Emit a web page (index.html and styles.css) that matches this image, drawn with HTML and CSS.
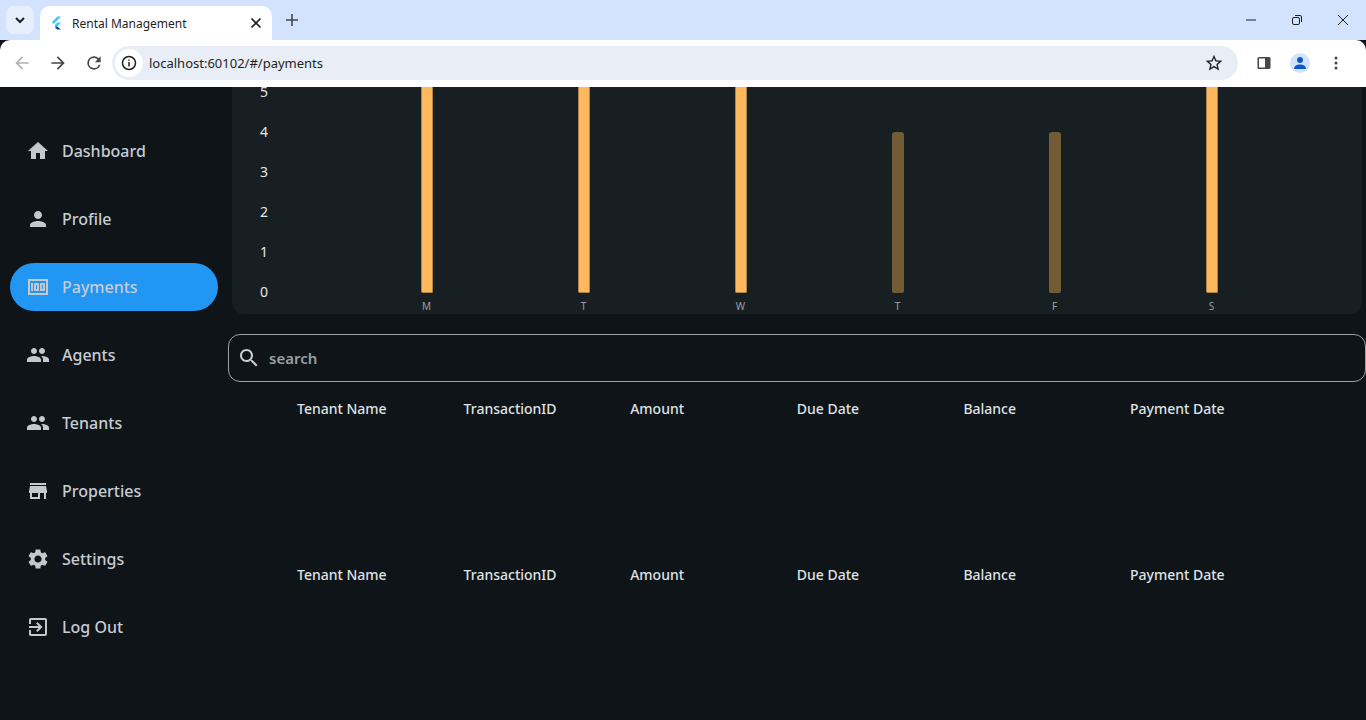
FILE: index.html
```html
<!DOCTYPE html>
<html lang="en">
<head>
    <meta charset="UTF-8">
    <title>Rental Management</title>
    <link rel="stylesheet" href="styles.css">
</head>
<body>
    <div class="tabstrip">
        <div class="tab-search">
            <svg class="ico-16" viewBox="0 0 16 16"><path d="M4 6l4 4 4-4" fill="none" stroke="#1f1f1f" stroke-width="2"/></svg>
        </div>
        <div class="tab">
            <svg class="favicon" viewBox="0 0 16 16">
                <path d="M9.5 1.5h3.6L5.6 9 3.8 7.2z" fill="#44c7f4"/>
                <path d="M9.4 7.6H13L9.2 11.4l-1.8-1.9z" fill="#44c7f4"/>
                <path d="M7.4 9.5l1.8 1.9-1.8 1.8z" fill="#1b6fc9"/>
                <path d="M9.2 11.4l3.8 3.1H9.4l-2-1.3z" fill="#0a3f8f"/>
            </svg>
            <span class="tab-title">Rental Management</span>
            <svg class="tab-close" viewBox="0 0 16 16"><path d="M3.5 3.5l9 9M12.500 3.500l-9 9" stroke="#1f1f1f" stroke-width="1.700"/></svg>
        </div>
        <svg class="new-tab" viewBox="0 0 16 16"><path d="M8 2v12M2 8h12" stroke="#444746" stroke-width="1.600"/></svg>
        <div class="window-btns">
            <svg class="win-btn" viewBox="0 0 16 16"><path d="M3 8h10" stroke="#1f1f1f" stroke-width="1"/></svg>
            <svg class="win-btn" viewBox="0 0 16 16"><rect x="3.500" y="5.500" width="7" height="7" rx="1.500" fill="none" stroke="#1f1f1f"/><path d="M6 3.500h5a1.500 1.500 0 0 1 1.500 1.500v5" fill="none" stroke="#1f1f1f"/></svg>
            <svg class="win-btn" viewBox="0 0 16 16"><path d="M3 3l10 10M13 3L3 13" stroke="#1f1f1f" stroke-width="1"/></svg>
        </div>
    </div>

    <div class="toolbar">
        <svg class="tool-btn" viewBox="0 0 24 24"><path d="M20 11H7.800l5.600-5.600L12 4l-8 8 8 8 1.400-1.400L7.800 13H20z" fill="#b0b2b3"/></svg>
        <svg class="tool-btn" viewBox="0 0 24 24"><path d="M4 11h12.200l-5.600-5.600L12 4l8 8-8 8-1.400-1.400 5.600-5.600H4z" fill="#444746"/></svg>
        <svg class="tool-btn" viewBox="0 0 24 24"><path d="M17.650 6.350A7.950 7.950 0 0 0 12 4a8 8 0 1 0 7.730 10h-2.080A6 6 0 1 1 12 6c1.660 0 3.140.69 4.220 1.780L13 11h7V4z" fill="#444746"/></svg>
        <div class="omnibox">
            <div class="site-info">
                <svg class="ico-16" viewBox="0 0 16 16"><circle cx="8" cy="8" r="6.500" fill="none" stroke="#1f1f1f" stroke-width="1.500"/><path d="M8 7v4.500M8 4.500v1.300" stroke="#1f1f1f" stroke-width="1.500"/></svg>
            </div>
            <span class="url">localhost:60102/#/payments</span>
            <svg class="star" viewBox="0 0 24 24"><path d="M22 9.240l-7.190-.62L12 2 9.190 8.630 2 9.240l5.460 4.730L5.820 21 12 17.270 18.180 21l-1.630-7.030L22 9.240zM12 15.400l-3.760 2.270 1-4.280-3.320-2.880 4.380-.38L12 6.100l1.710 4.040 4.380.38-3.320 2.880 1 4.280L12 15.400z" fill="#1f1f1f"/></svg>
        </div>
        <div class="toolbar-right">
            <svg class="side-panel" viewBox="0 0 16 16"><rect x="1.500" y="2" width="13" height="12" rx="1.500" fill="#444746"/><rect x="3" y="3.500" width="6" height="9" fill="#fff"/></svg>
            <div class="avatar">
                <svg class="ico-16" viewBox="0 0 16 16"><circle cx="8" cy="5" r="3" fill="#0b57d0"/><path d="M2 14c0-3.200 3-4.500 6-4.500s6 1.300 6 4.500z" fill="#0b57d0"/></svg>
            </div>
            <svg class="menu-dots" viewBox="0 0 16 16"><circle cx="8" cy="3" r="1.500" fill="#444746"/><circle cx="8" cy="8" r="1.500" fill="#444746"/><circle cx="8" cy="13" r="1.500" fill="#444746"/></svg>
        </div>
    </div>

    <div class="app">
        <nav class="sidebar">
            <a class="nav-item">
                <svg class="nav-ico" viewBox="0 0 24 24"><path d="M10 20v-6h4v6h5v-8h3L12 3 2 12h3v8z"/></svg>
                <span>Dashboard</span>
            </a>
            <a class="nav-item">
                <svg class="nav-ico" viewBox="0 0 24 24"><path d="M12 12c2.210 0 4-1.790 4-4s-1.790-4-4-4-4 1.790-4 4 1.790 4 4 4zm0 2c-2.670 0-8 1.340-8 4v2h16v-2c0-2.660-5.330-4-8-4z"/></svg>
                <span>Profile</span>
            </a>
            <a class="nav-item active">
                <svg class="nav-ico" viewBox="0 0 24 24"><path d="M5 8h2v8H5zm7 0H9c-.55 0-1 .45-1 1v6c0 .55.45 1 1 1h3c.55 0 1-.45 1-1V9c0-.55-.45-1-1-1zm-1 6h-1v-4h1v4zm7-6h-3c-.55 0-1 .45-1 1v6c0 .55.45 1 1 1h3c.55 0 1-.45 1-1V9c0-.55-.45-1-1-1zm-1 6h-1v-4h1v4z"/><path d="M2 4v16h20V4H2zm2 14V6h16v12H4z"/></svg>
                <span>Payments</span>
            </a>
            <a class="nav-item">
                <svg class="nav-ico" viewBox="0 0 24 24"><path d="M16 11c1.660 0 2.990-1.340 2.990-3S17.660 5 16 5c-1.660 0-3 1.340-3 3s1.340 3 3 3zm-8 0c1.660 0 2.990-1.340 2.990-3S9.660 5 8 5C6.340 5 5 6.340 5 8s1.340 3 3 3zm0 2c-2.330 0-7 1.170-7 3.500V19h14v-2.500c0-2.330-4.670-3.500-7-3.500zm8 0c-.29 0-.62.02-.97.05 1.160.84 1.970 1.970 1.970 3.450V19h6v-2.500c0-2.330-4.670-3.500-7-3.500z"/></svg>
                <span>Agents</span>
            </a>
            <a class="nav-item">
                <svg class="nav-ico" viewBox="0 0 24 24"><path d="M16 11c1.660 0 2.990-1.340 2.990-3S17.660 5 16 5c-1.660 0-3 1.340-3 3s1.340 3 3 3zm-8 0c1.660 0 2.990-1.340 2.990-3S9.660 5 8 5C6.340 5 5 6.340 5 8s1.340 3 3 3zm0 2c-2.330 0-7 1.170-7 3.500V19h14v-2.500c0-2.330-4.670-3.500-7-3.500zm8 0c-.29 0-.62.02-.97.05 1.160.84 1.970 1.970 1.970 3.450V19h6v-2.500c0-2.330-4.670-3.500-7-3.500z"/></svg>
                <span>Tenants</span>
            </a>
            <a class="nav-item">
                <svg class="nav-ico" viewBox="0 0 24 24"><path d="M20 4H4v2h16V4zm1 10v-2l-1-5H4l-1 5v2h1v6h10v-6h4v6h2v-6h1zm-9 4H6v-4h6v4z"/></svg>
                <span>Properties</span>
            </a>
            <a class="nav-item">
                <svg class="nav-ico" viewBox="0 0 24 24"><path d="M19.140 12.940c.04-.3.06-.61.06-.94 0-.32-.02-.64-.07-.94l2.030-1.580a.49.49 0 0 0 .12-.61l-1.920-3.320a.488.488 0 0 0-.59-.22l-2.390.96c-.5-.38-1.030-.7-1.620-.94l-.36-2.540a.484.484 0 0 0-.48-.41h-3.840c-.24 0-.43.17-.47.41l-.36 2.540c-.59.24-1.130.57-1.620.94l-2.390-.96c-.22-.08-.47 0-.59.22L2.740 8.870c-.12.21-.08.47.12.61l2.030 1.580c-.05.3-.09.63-.09.94s.02.64.07.94l-2.030 1.580a.49.49 0 0 0-.12.61l1.920 3.320c.12.22.37.29.59.22l2.390-.96c.5.38 1.030.7 1.620.94l.36 2.540c.05.24.24.41.48.41h3.840c.24 0 .44-.17.47-.41l.36-2.540c.59-.24 1.130-.56 1.620-.94l2.390.96c.22.08.47 0 .59-.22l1.920-3.320c.12-.22.07-.47-.12-.61l-2.010-1.580zM12 15.600c-1.980 0-3.600-1.620-3.600-3.600s1.620-3.600 3.600-3.600 3.600 1.620 3.600 3.600-1.620 3.600-3.600 3.600z"/></svg>
                <span>Settings</span>
            </a>
            <a class="nav-item">
                <svg class="nav-ico" viewBox="0 0 24 24"><path d="M10.090 15.590L11.500 17l5-5-5-5-1.410 1.410L12.670 11H3v2h9.670l-2.580 2.590zM19 3H5c-1.110 0-2 .9-2 2v4h2V5h14v14H5v-4H3v4c0 1.100.89 2 2 2h14c1.100 0 2-.9 2-2V5c0-1.100-.9-2-2-2z"/></svg>
                <span>Log Out</span>
            </a>
        </nav>

        <main class="content">
            <section class="chart-card">
                <div class="y-axis">
                    <span>5</span>
                    <span>4</span>
                    <span>3</span>
                    <span>2</span>
                    <span>1</span>
                    <span>0</span>
                </div>
                <div class="plot">
                    <div class="bar-col"><div class="bar"></div><span class="bar-label">M</span></div>
                    <div class="bar-col"><div class="bar"></div><span class="bar-label">T</span></div>
                    <div class="bar-col"><div class="bar"></div><span class="bar-label">W</span></div>
                    <div class="bar-col"><div class="bar dim"></div><span class="bar-label">T</span></div>
                    <div class="bar-col"><div class="bar dim"></div><span class="bar-label">F</span></div>
                    <div class="bar-col"><div class="bar"></div><span class="bar-label">S</span></div>
                </div>
            </section>

            <div class="search-box">
                <svg class="search-ico" viewBox="0 0 24 24"><path d="M15.500 14h-.79l-.28-.27C15.410 12.590 16 11.110 16 9.500 16 5.910 13.090 3 9.500 3S3 5.910 3 9.500 5.910 16 9.500 16c1.610 0 3.090-.59 4.230-1.570l.27.28v.79l5 4.990L20.490 19l-4.990-5zm-6 0C7.010 14 5 11.990 5 9.500S7.010 5 9.500 5 14 7.010 14 9.500 11.990 14 9.500 14z"/></svg>
                <span class="search-text">search</span>
            </div>

            <div class="table-head">
                <span>Tenant Name</span>
                <span>TransactionID</span>
                <span>Amount</span>
                <span>Due Date</span>
                <span>Balance</span>
                <span>Payment Date</span>
            </div>
            <div class="table-head second">
                <span>Tenant Name</span>
                <span>TransactionID</span>
                <span>Amount</span>
                <span>Due Date</span>
                <span>Balance</span>
                <span>Payment Date</span>
            </div>
        </main>
    </div>
</body>
</html>
```

FILE: styles.css
```css
* {
    box-sizing: border-box;
}

html, body {
    margin: 0;
    height: 720px;
    overflow: hidden;
}

body {
    font-family: "Noto Sans", "Open Sans", sans-serif;
    background-color: #0f1418;
    display: flex;
    flex-direction: column;
}

.ico-16 {
    width: 16px;
    height: 16px;
    display: block;
}

/* browser tabs */
.tabstrip {
    height: 40px;
    background-color: #d3e3fd;
    display: flex;
    align-items: flex-end;
    padding-left: 6px;
    flex-shrink: 0;
}

.tab-search {
    width: 28px;
    height: 28px;
    margin-bottom: 6px;
    border-radius: 8px;
    background-color: #e6eefc;
    display: flex;
    align-items: center;
    justify-content: center;
}

.tab {
    width: 232px;
    height: 34px;
    margin-left: 6px;
    background-color: #fff;
    border-radius: 10px 10px 0 0;
    display: flex;
    align-items: center;
    padding: 0 8px;
}

.favicon {
    width: 16px;
    height: 16px;
    flex-shrink: 0;
}

.tab-title {
    margin-left: 8px;
    font-size: 12px;
    color: #1f1f1f;
    flex: 1;
}

.tab-close {
    width: 16px;
    height: 16px;
}

.new-tab {
    width: 16px;
    height: 16px;
    margin: 0 0 12px 12px;
}

.window-btns {
    margin-left: auto;
    height: 40px;
    display: flex;
    align-items: center;
    padding-right: 15px;
    gap: 30px;
}

.win-btn {
    width: 16px;
    height: 16px;
}

/* browser toolbar */
.toolbar {
    height: 47px;
    background-color: #fff;
    border-radius: 10px 10px 0 0;
    margin-top: 0;
    display: flex;
    align-items: center;
    padding: 0 12px 1px 12px;
    flex-shrink: 0;
    position: relative;
}

.tool-btn {
    width: 20px;
    height: 20px;
    margin-right: 16px;
}

.omnibox {
    width: 1126px;
    height: 34px;
    margin-left: -8px;
    border-radius: 17px;
    background-color: #e9eef6;
    display: flex;
    align-items: center;
    padding: 0 14px 0 3px;
}

.site-info {
    width: 28px;
    height: 28px;
    border-radius: 50%;
    background-color: #fff;
    display: flex;
    align-items: center;
    justify-content: center;
}

.url {
    margin-left: 6px;
    font-size: 13px;
    color: #1f1f1f;
    flex: 1;
}

.star {
    width: 20px;
    height: 20px;
}

.toolbar-right {
    display: flex;
    align-items: center;
    margin-left: 18px;
}

.side-panel {
    width: 16px;
    height: 16px;
}

.avatar {
    width: 20px;
    height: 20px;
    margin-left: 18px;
    border-radius: 50%;
    background-color: #d3e3fd;
    display: flex;
    align-items: center;
    justify-content: center;
}

.menu-dots {
    width: 16px;
    height: 16px;
    margin-left: 18px;
}

/* app */
.app {
    flex: 1;
    display: flex;
    min-height: 0;
    background-color: #0f1418;
}

.sidebar {
    width: 228px;
    flex-shrink: 0;
    padding: 40px 10px 0 10px;
    display: flex;
    flex-direction: column;
    gap: 20px;
}

.nav-item {
    height: 48px;
    border-radius: 24px;
    display: flex;
    align-items: center;
    gap: 12px;
    padding-left: 16px;
    font-size: 16px;
    font-weight: 500;
    color: #c8ccd2;
}

.nav-item.active {
    background-color: #2196f3;
}

.nav-ico {
    width: 24px;
    height: 24px;
    fill: #c4c8cf;
}

.content {
    flex: 1;
    min-width: 0;
}

.chart-card {
    margin-left: 4px;
    margin-right: 4px;
    height: 227px;
    background-color: #171f23;
    border-radius: 0 0 12px 12px;
    display: flex;
    overflow: hidden;
}

.y-axis {
    width: 116px;
    height: 227px;
    margin-top: -15px;
    padding-left: 28px;
    display: flex;
    flex-direction: column;
    color: #e4e6e7;
    font-size: 14px;
}

.y-axis span {
    height: 40px;
    line-height: 40px;
}

.plot {
    flex: 1;
    display: flex;
    padding-right: 72px;
}

.bar-col {
    width: 157px;
    height: 227px;
    display: flex;
    flex-direction: column;
    align-items: center;
    justify-content: flex-end;
}

.bar {
    width: 12px;
    height: 206px;
    background-color: #ffb85c;
    border: 1px solid #b18546;
    border-top: none;
    border-radius: 0 0 2px 2px;
}

.bar.dim {
    height: 161px;
    background-color: #735b35;
    border: none;
    border-radius: 3px 3px 2px 2px;
}

.bar-label {
    height: 21px;
    padding-top: 5px;
    line-height: 16px;
    font-size: 10px;
    color: #9a9fa2;
}

.search-box {
    height: 48px;
    margin-top: 20px;
    border: 1px solid #9ea1a3;
    border-radius: 12px;
    display: flex;
    align-items: center;
    padding-left: 8px;
    gap: 8px;
}

.search-ico {
    width: 24px;
    height: 24px;
    fill: #c8ccd2;
}

.search-text {
    font-size: 15px;
    font-weight: 600;
    color: #9a9fa2;
}

.table-head {
    height: 52px;
    padding-left: 69px;
    display: grid;
    grid-template-columns: repeat(6, 166.600px);
    align-items: center;
    font-size: 14px;
    font-weight: 500;
    color: #dfe2e4;
}

.table-head.second {
    margin-top: 114px;
}
```
